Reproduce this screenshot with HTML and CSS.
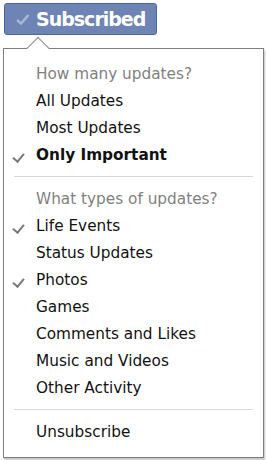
FILE: index.html
```html
<!DOCTYPE html>
<html lang="en">
<head>
    <meta charset="UTF-8">
    <title>Subscribed</title>
    <link rel="stylesheet" href="styles.css">
</head>
<body>
    <button class="sub-btn">
        <svg class="sub-check" width="14" height="12" viewBox="0 0 14 12"><path d="M1 7 L5 10.5 L12.5 2" fill="none" stroke="#a9b6d3" stroke-width="2.6"/></svg>
        Subscribed
    </button>
    <div class="menu">
        <div class="menu-title">How many updates?</div>
        <div class="menu-item">All Updates</div>
        <div class="menu-item">Most Updates</div>
        <div class="menu-item checked bold">Only Important</div>
        <div class="sep"></div>
        <div class="menu-title">What types of updates?</div>
        <div class="menu-item checked">Life Events</div>
        <div class="menu-item">Status Updates</div>
        <div class="menu-item checked">Photos</div>
        <div class="menu-item">Games</div>
        <div class="menu-item">Comments and Likes</div>
        <div class="menu-item">Music and Videos</div>
        <div class="menu-item">Other Activity</div>
        <div class="sep"></div>
        <div class="menu-item">Unsubscribe</div>
    </div>
</body>
</html>
```

FILE: styles.css
```css
body {
    margin: 0;
    padding: 3px 0 0 4px;
    background-color: #fff;
    font-family: "DejaVu Sans", "Liberation Sans", sans-serif;
    width: 266px;
    height: 460px;
    overflow: hidden;
    box-sizing: border-box;
}
.sub-btn {
    display: flex;
    align-items: center;
    gap: 6px;
    height: 32px;
    width: 153px;
    padding: 0 0 0 11px;
    background-color: #6d84b4;
    border: 1px solid #4c66a4;
    border-radius: 3px;
    color: #fff;
    font-family: inherit;
    font-weight: bold;
    font-size: 19px;
    letter-spacing: -1px;
    box-sizing: border-box;
}
.menu {
    position: relative;
    margin: 13px 0 0 -1px;
    width: 261px;
    height: 410px;
    box-sizing: border-box;
    border: 1px solid #7f7f7f;
    background-color: #fff;
    box-shadow: 1px 2px 2px rgba(0, 0, 0, 0.25);
    padding-top: 12px;
}
/* little caret pointing at the button */
.menu::before {
    content: "";
    position: absolute;
    top: -9px;
    left: 26px;
    width: 15px;
    height: 15px;
    background: #fff;
    border-top: 1px solid #8a8a8a;
    border-left: 1px solid #8a8a8a;
    transform: rotate(45deg);
}
.menu-title,
.menu-item {
    height: 27px;
    line-height: 27px;
    padding-left: 32px;
    font-size: 15.3px;
    color: #111;
    position: relative;
}
.menu-title {
    color: #7f7f7f;
}
.bold {
    font-weight: bold;
}
.checked::before {
    content: "";
    position: absolute;
    left: 11px;
    top: 9px;
    width: 5px;
    height: 9px;
    border-right: 2.5px solid #777;
    border-bottom: 2.5px solid #777;
    transform: rotate(40deg);
}
.sep {
    height: 1px;
    background-color: #d9d9d9;
    margin: 7px 10px 9px 10px;
}
```
